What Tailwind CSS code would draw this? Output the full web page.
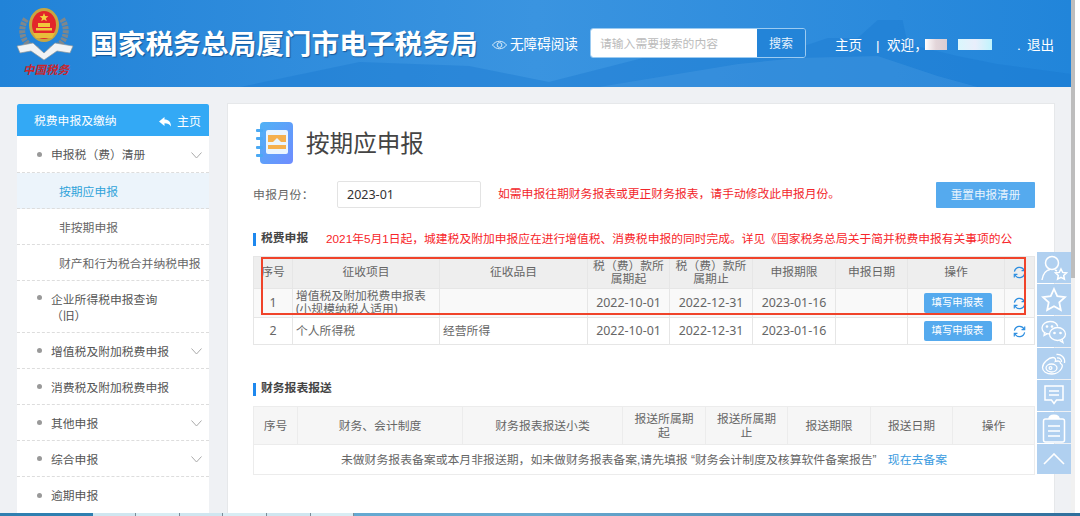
<!DOCTYPE html>
<html lang="zh-CN">
  <head>
    <meta charset="UTF-8" />
    <title>按期应申报</title>
    <script src="https://cdn.jsdelivr.net/npm/@tailwindcss/browser@4"></script>
  </head>
  <body class="bg-white overflow-hidden">
    <div class="relative w-[1080px] h-[516px] overflow-hidden flex flex-col font-['Liberation_Sans','Noto_Sans_CJK_SC',sans-serif] text-[#666]">
      <div class="flex-1 flex min-h-0">
        <div class="w-[1071px] flex flex-col bg-[#eff1f4]">
          <!-- header -->
          <header class="relative h-[87px] shrink-0 flex items-center overflow-hidden bg-gradient-to-r from-[#2183d8] via-[#3a94e0] to-[#2185da] text-white">
            <svg class="absolute left-[240px] top-[14px] w-[831px] h-[73px]" viewBox="0 0 834 73" preserveAspectRatio="none">
              <path d="M0 73 L120 48 L230 52 L310 68 L420 40 L500 34 L560 34 L590 24 L620 24 L640 6 L665 6 L670 30 L720 42 L760 50 L834 60 L834 73 Z" fill="#1a78cf" fill-opacity="0.4" />
              <path d="M360 73 L500 50 L560 44 L640 42 L700 62 L740 73 Z" fill="#5aa8e6" fill-opacity="0.25" />
            </svg>
            <!-- logo -->
            <div class="relative w-[90px] shrink-0 self-stretch">
              <svg class="absolute left-[15px] top-[6px] w-[60px] h-[56px]" viewBox="0 0 60 56">
                <path d="M11 13 C3 25 8 40 24 44" fill="none" stroke="#7f878b" stroke-width="6" stroke-dasharray="3 1" />
                <path d="M47 13 C55 25 50 40 34 44" fill="none" stroke="#7f878b" stroke-width="6" stroke-dasharray="3 1" />
                <path d="M2 40 L18 37 L29 47 L40 37 L58 40 L55 47 L42 45 L29 54 L16 45 L5 47 Z" fill="#f1f3f4" stroke="#8d969b" stroke-width="0.7" />
                <ellipse cx="29" cy="19" rx="15" ry="17" fill="#c9a640" />
                <ellipse cx="29" cy="19" rx="12" ry="14" fill="#e3262a" />
                <path d="M29 7 l1.2 3 3.2 0.2 -2.5 2 0.9 3 -2.8 -1.7 -2.8 1.7 0.9 -3 -2.5 -2 3.2 -0.2 Z" fill="#f4d23f" />
                <path d="M21 22 h16 v2.5 h-16 Z M23 17 h12 v4 h-12 Z" fill="#f1c93c" />
                <path d="M18 27 h22 l-3 5 h-16 Z" fill="#e8bd3a" />
              </svg>
              <span class="absolute left-[23px] top-[62px] text-[11.5px] leading-[16px] whitespace-nowrap text-[#c9252b] font-['Liberation_Serif','Noto_Sans_CJK_SC',serif] italic font-bold">中国税务</span>
            </div>
            <h1 class="relative w-[402px] shrink-0 text-[27.7px] leading-[34px] font-bold whitespace-nowrap [text-shadow:1px_1px_1px_rgba(0,40,90,0.5)] mt-[2px]">国家税务总局厦门市电子税务局</h1>
            <svg class="relative w-[15px] h-[10px] shrink-0 mt-[3px]" viewBox="0 0 15 10" fill="none" stroke="#d7ebfa" stroke-width="1">
              <path d="M0.5 5 C4 0 11 0 14.5 5 C11 10 4 10 0.5 5 Z" />
              <circle cx="7.5" cy="5" r="2.4" />
            </svg>
            <span class="relative ml-[3px] w-[80px] shrink-0 text-[13.6px] whitespace-nowrap mt-[3px]">无障碍阅读</span>
            <div class="relative w-[216px] h-[30px] shrink-0 flex rounded-[3px] border border-[#9ccbf1] overflow-hidden -mt-[1px]">
              <div class="flex-1 bg-white pl-[9px] pt-[1px] text-[11.8px] leading-[28px] text-[#bbb]">请输入需要搜索的内容</div>
              <div class="w-[48px] bg-[#2384d8] text-center pt-[1px] text-[12px] leading-[28px] text-[#e6f2fc]">搜索</div>
            </div>
            <nav class="relative flex items-center ml-[29px] text-[13.6px] whitespace-nowrap mt-[5px]">
              <span class="w-[41px]">主页</span>
              <span class="w-[11px]">|</span>
              <span class="w-[38px]">欢迎，</span>
              <span class="w-[22px] h-[11px] -mt-[2px] bg-gradient-to-r from-white via-[#e3d5d9] to-[#d8cdd3]"></span>
              <span class="w-[34px] h-[11px] -mt-[2px] ml-[11px] bg-gradient-to-r from-[#d9f7fd] via-[#e9eefb] to-[#bff3fd]"></span>
              <span class="w-[35px] pl-[25px]">.</span>
              <span>退出</span>
            </nav>
          </header>
          <!-- body -->
          <div class="flex-1 min-h-0 flex items-start pt-[17px] pl-[17px] gap-[18px] overflow-hidden">
            <aside class="w-[192px] shrink-0 h-[409px] bg-white text-[11.8px] text-[#666]">
              <div class="h-[32px] pt-[4px] flex items-center justify-between bg-[#33a9f5] text-white rounded-t-[2px] pl-[17px] pr-[8px]">
                <span>税费申报及缴纳</span>
                <span class="flex items-center gap-[6px] text-[12px]">
                  <svg class="w-[12px] h-[10px]" viewBox="0 0 12 10" fill="white"><path d="M0 4.5 L5.5 0 V2.6 C9.5 2.6 12 5 12 9.5 C10.5 7 8.5 6.2 5.5 6.2 V9 Z" /></svg>
                  主页
                </span>
              </div>
              <div class="h-[37px] pt-[4px] flex items-center pl-[20px] pr-[7px] border-b border-dashed border-[#ddd] text-[#555]">
                <i class="w-[5px] h-[5px] rounded-full bg-[#999] mr-[9px] mb-[4px]"></i>
                <span class="flex-1">申报税（费）清册</span>
                <svg class="w-[11px] h-[7px] mb-[2px]" viewBox="0 0 11 7" fill="none" stroke="#aaa"><path d="M0.5 0.5 L5.5 6 L10.5 0.5" /></svg>
              </div>
              <div class="h-[36px] pt-[4px] flex items-center pl-[42px] bg-[#ecf4fb] border-b border-dashed border-[#ddd] text-[#2fa3da]">按期应申报</div>
              <div class="h-[36px] pt-[4px] flex items-center pl-[42px] border-b border-dashed border-[#ddd]">非按期申报</div>
              <div class="h-[36px] pt-[4px] flex items-center pl-[42px] border-b border-dashed border-[#ddd] whitespace-nowrap">财产和行为税合并纳税申报</div>
              <div class="h-[52px] flex pt-[11px] pl-[20px] border-b border-dashed border-[#ddd] text-[#555]">
                <i class="w-[5px] h-[5px] rounded-full bg-[#999] mr-[9px] mt-[3px]"></i>
                <span class="leading-[16px]">企业所得税申报查询<br />（旧）</span>
              </div>
              <div class="h-[36px] pt-[4px] flex items-center pl-[20px] pr-[7px] border-b border-dashed border-[#ddd] text-[#555]">
                <i class="w-[5px] h-[5px] rounded-full bg-[#999] mr-[9px] mb-[4px]"></i>
                <span class="flex-1">增值税及附加税费申报</span>
                <svg class="w-[11px] h-[7px] mb-[2px]" viewBox="0 0 11 7" fill="none" stroke="#aaa"><path d="M0.5 0.5 L5.5 6 L10.5 0.5" /></svg>
              </div>
              <div class="h-[36px] pt-[4px] flex items-center pl-[20px] pr-[7px] border-b border-dashed border-[#ddd] text-[#555]">
                <i class="w-[5px] h-[5px] rounded-full bg-[#999] mr-[9px] mb-[4px]"></i>
                <span class="flex-1">消费税及附加税费申报</span>
              </div>
              <div class="h-[36px] pt-[4px] flex items-center pl-[20px] pr-[7px] border-b border-dashed border-[#ddd] text-[#555]">
                <i class="w-[5px] h-[5px] rounded-full bg-[#999] mr-[9px] mb-[4px]"></i>
                <span class="flex-1">其他申报</span>
                <svg class="w-[11px] h-[7px] mb-[2px]" viewBox="0 0 11 7" fill="none" stroke="#aaa"><path d="M0.5 0.5 L5.5 6 L10.5 0.5" /></svg>
              </div>
              <div class="h-[36px] pt-[4px] flex items-center pl-[20px] pr-[7px] border-b border-dashed border-[#ddd] text-[#555]">
                <i class="w-[5px] h-[5px] rounded-full bg-[#999] mr-[9px] mb-[4px]"></i>
                <span class="flex-1">综合申报</span>
                <svg class="w-[11px] h-[7px] mb-[2px]" viewBox="0 0 11 7" fill="none" stroke="#aaa"><path d="M0.5 0.5 L5.5 6 L10.5 0.5" /></svg>
              </div>
              <div class="h-[36px] pt-[4px] flex items-center pl-[20px] pr-[7px] text-[#555]">
                <i class="w-[5px] h-[5px] rounded-full bg-[#999] mr-[9px] mb-[4px]"></i>
                <span class="flex-1">逾期申报</span>
              </div>
            </aside>
            <!-- main card -->
            <main class="relative w-[828px] shrink-0 h-[420px] bg-white border-l border-t border-r border-[#e6e8ea] -mt-[1px] pl-[25px] pr-[19px] text-[11.8px]">
              <div class="flex items-center h-[42px] mt-[18px] pl-[3px]">
                <svg class="w-[38px] h-[42px]" viewBox="0 0 38 42">
                  <defs><linearGradient id="bk" x1="0" y1="0" x2="1" y2="1"><stop offset="0" stop-color="#4fb2f5" /><stop offset="1" stop-color="#6f8cff" /></linearGradient></defs>
                  <rect x="4" y="0" width="33" height="42" rx="4" fill="url(#bk)" />
                  <rect x="0" y="7" width="7" height="3" rx="1" fill="#4aa9f4" /><rect x="0" y="15" width="7" height="3" rx="1" fill="#4aa9f4" /><rect x="0" y="24" width="7" height="3" rx="1" fill="#4aa9f4" /><rect x="0" y="32" width="7" height="3" rx="1" fill="#4aa9f4" />
                  <rect x="10" y="8" width="22" height="24" rx="2" fill="#eaf5ff" />
                  <path d="M12 20 V13 H30 V20 H25 L21 16 L17 20 Z" fill="#f5b04e" />
                  <rect x="12" y="23" width="18" height="4" fill="#f5b04e" />
                </svg>
                <h2 class="ml-[12px] pt-[4px] text-[23.6px] text-[#444] font-normal">按期应申报</h2>
              </div>
              <div class="flex items-center mt-[17px] h-[27px]">
                <span class="w-[84px] pt-[3px] tracking-[0.4px] text-[#666]">申报月份：</span>
                <div class="w-[144px] h-[27px] border border-[#e3e3e3] rounded-[2px] pl-[9px] text-[12.5px] leading-[26px] text-[#333] font-['Noto_Sans','Noto_Sans_CJK_SC',sans-serif]">2023-01</div>
                <span class="ml-[17px] pt-[1px] flex-1 text-[#f2262b] text-[11.8px]">如需申报往期财务报表或更正财务报表，请手动修改此申报月份。</span>
                <button class="w-[99px] h-[26px] pt-[1px] rounded-[1px] bg-[#55aaee] text-[#e8f4fd] text-[11.6px]">重置申报清册</button>
              </div>
              <div class="flex items-center mt-[22px] h-[18px] whitespace-nowrap overflow-hidden">
                <i class="w-[3px] h-[13px] shrink-0 bg-[#1e88ee] mr-[5px]"></i>
                <b class="w-[65px] shrink-0 text-[#444] font-bold">税费申报</b>
                <span class="text-[#f7252a] text-[11.77px]">2021年5月1日起，城建税及附加申报应在进行增值税、消费税申报的同时完成。详见《国家税务总局关于简并税费申报有关事项的公</span>
              </div>
              <table class="table-fixed border-collapse mt-[8px] w-[781px] text-center text-[#666]">
                <colgroup><col class="w-[39px]" /><col class="w-[147px]" /><col class="w-[148px]" /><col class="w-[82px]" /><col class="w-[83px]" /><col class="w-[83px]" /><col class="w-[72px]" /><col class="w-[97px]" /><col class="w-[30px]" /></colgroup>
                <tr class="h-[32px] bg-[#eee] leading-[13px]">
                  <th class="border border-[#e6e6e6] font-normal">序号</th><th class="border border-[#e6e6e6] font-normal">征收项目</th><th class="border border-[#e6e6e6] font-normal">征收品目</th><th class="border border-[#e6e6e6] font-normal">税（费）款所属期起</th><th class="border border-[#e6e6e6] font-normal">税（费）款所属期止</th><th class="border border-[#e6e6e6] font-normal">申报期限</th><th class="border border-[#e6e6e6] font-normal">申报日期</th><th class="border border-[#e6e6e6] font-normal">操作</th>
                  <th class="border border-[#e6e6e6] font-normal"><svg class="w-[13px] h-[13px] mx-auto" viewBox="0 0 14 14" fill="none" stroke="#2f8fe0" stroke-width="1.3"><path d="M1.5 6 A5.6 5.6 0 0 1 12 4.5 M12.5 8 A5.6 5.6 0 0 1 2 9.5" /><path d="M12.6 1.5 V5 H9.2 M1.4 12.5 V9 H4.8" /></svg></th>
                </tr>
                <tr class="h-[28px] bg-[#f9f9f9] font-['Noto_Sans','Noto_Sans_CJK_SC',sans-serif] text-[12.4px]">
                  <td class="border border-[#e6e6e6]">1</td><td class="border border-[#e6e6e6] text-left pl-[3px] pb-[2px] text-[11.8px] leading-[13px]">增值税及附加税费申报表<br />(小规模纳税人适用)</td><td class="border border-[#e6e6e6]"></td><td class="border border-[#e6e6e6]">2022-10-01</td><td class="border border-[#e6e6e6]">2022-12-31</td><td class="border border-[#e6e6e6]">2023-01-16</td><td class="border border-[#e6e6e6]"></td>
                  <td class="border border-[#e6e6e6]"><button class="w-[68px] h-[20px] ml-[3px] rounded-[2px] bg-[#55aaee] text-white text-[10.4px]">填写申报表</button></td>
                  <td class="border border-[#e6e6e6]"><svg class="w-[13px] h-[13px] mx-auto" viewBox="0 0 14 14" fill="none" stroke="#2f8fe0" stroke-width="1.3"><path d="M1.5 6 A5.6 5.6 0 0 1 12 4.5 M12.5 8 A5.6 5.6 0 0 1 2 9.5" /><path d="M12.6 1.5 V5 H9.2 M1.4 12.5 V9 H4.8" /></svg></td>
                </tr>
                <tr class="h-[27px] font-['Noto_Sans','Noto_Sans_CJK_SC',sans-serif] text-[12.4px]">
                  <td class="border border-[#e6e6e6]">2</td><td class="border border-[#e6e6e6] text-left pl-[3px] text-[11.8px]">个人所得税</td><td class="border border-[#e6e6e6] text-left pl-[3px] text-[11.8px]">经营所得</td><td class="border border-[#e6e6e6]">2022-10-01</td><td class="border border-[#e6e6e6]">2022-12-31</td><td class="border border-[#e6e6e6]">2023-01-16</td><td class="border border-[#e6e6e6]"></td>
                  <td class="border border-[#e6e6e6]"><button class="w-[68px] h-[20px] ml-[3px] rounded-[2px] bg-[#55aaee] text-white text-[10.4px]">填写申报表</button></td>
                  <td class="border border-[#e6e6e6]"><svg class="w-[13px] h-[13px] mx-auto" viewBox="0 0 14 14" fill="none" stroke="#2f8fe0" stroke-width="1.3"><path d="M1.5 6 A5.6 5.6 0 0 1 12 4.5 M12.5 8 A5.6 5.6 0 0 1 2 9.5" /><path d="M12.6 1.5 V5 H9.2 M1.4 12.5 V9 H4.8" /></svg></td>
                </tr>
              </table>
              <div class="flex items-center mt-[35px] h-[18px]">
                <i class="w-[3px] h-[13px] bg-[#1e88ee] mr-[5px]"></i>
                <b class="text-[#444] font-bold">财务报表报送</b>
              </div>
              <table class="table-fixed border-collapse mt-[8px] w-[781px] text-center text-[#666]">
                <colgroup><col class="w-[44px]" /><col class="w-[165px]" /><col class="w-[160px]" /><col class="w-[83px]" /><col class="w-[82px]" /><col class="w-[83px]" /><col class="w-[82px]" /><col class="w-[82px]" /></colgroup>
                <tr class="h-[38px] bg-[#f6f6f6] leading-[14px]">
                  <th class="border border-[#ececec] font-normal">序号</th><th class="border border-[#ececec] font-normal">财务、会计制度</th><th class="border border-[#ececec] font-normal">财务报表报送小类</th><th class="border border-[#ececec] font-normal px-[10px]">报送所属期起</th><th class="border border-[#ececec] font-normal px-[10px]">报送所属期止</th><th class="border border-[#ececec] font-normal">报送期限</th><th class="border border-[#ececec] font-normal">报送日期</th><th class="border border-[#ececec] font-normal">操作</th>
                </tr>
                <tr class="h-[30px]">
                  <td colspan="8" class="border border-[#ececec] pt-[2px] text-[11.85px]">未做财务报表备案或本月非报送期，如未做财务报表备案,请先填报 “财务会计制度及核算软件备案报告” <a class="text-[#3a9be0] ml-[8px]">现在去备案</a></td>
                </tr>
              </table>
              <!-- red annotation box -->
              <div class="absolute left-[33px] top-[153px] w-[765px] h-[58px] border-2 border-[#f0432a]"></div>
            </main>
          </div>
        </div>
        <!-- scrollbar -->
        <div class="w-[4px] bg-[#f1f1f1]"><div class="h-[278px] bg-[#bdbdbd]"></div></div>
      </div>
      <!-- taskbar sliver -->
      <div class="h-[3px] shrink-0 flex bg-gradient-to-r from-[#5aa6d2] via-[#6aaad0] to-[#2f6f9c]">
        <div class="w-[93px] bg-[#2f7fb0]"></div>
        <div class="w-[43px] bg-[#cfe6f0] border-r border-[#7b8d99]"></div>
        <div class="w-[44px] bg-[#d8edf4] border-r border-[#7b8d99]"></div>
        <div class="w-[43px] bg-[#cfe6f0] border-r border-[#7b8d99]"></div>
        <div class="w-[44px] bg-[#d8edf4] border-r border-[#7b8d99]"></div>
        <div class="w-[44px] bg-[#cfe6f0] border-r border-[#7b8d99]"></div>
        <div class="w-[43px] bg-[#d8edf4] border-r border-[#7b8d99]"></div>
      </div>
      <!-- floating toolbar -->
      <div class="absolute left-[1037px] top-[252px] w-[34px] flex flex-col gap-[1px]">
        <div class="h-[31px] bg-[#b0d0f0] flex items-center justify-center"><svg class="w-[28px] h-[28px]" viewBox="0 0 28 28" fill="none" stroke="white" stroke-width="1.5"><circle cx="12" cy="9" r="6.5" /><path d="M2 26 C3 19 7 16 10 15.5 M15 16 L17 17" /><path d="M21 15 l1.7 3.4 3.8 0.5 -2.8 2.6 0.7 3.7 -3.4 -1.8 -3.4 1.8 0.7 -3.7 -2.8 -2.6 3.8 -0.5 Z" /></svg></div>
        <div class="h-[31px] bg-[#b0d0f0] flex items-center justify-center"><svg class="w-[26px] h-[26px]" viewBox="0 0 26 26" fill="none" stroke="white" stroke-width="1.8"><path d="M13 2 l3.3 7.2 7.7 0.9 -5.7 5.3 1.5 7.7 -6.8 -3.9 -6.8 3.9 1.5 -7.7 -5.7 -5.3 7.7 -0.9 Z" /></svg></div>
        <div class="h-[31px] bg-[#b0d0f0] flex items-center justify-center"><svg class="w-[26px] h-[24px]" viewBox="0 0 26 24" fill="none" stroke="white" stroke-width="1.3"><path d="M8.5 14 C4 14 1 11.5 1 8 C1 4 5 1.5 9 1.5 C13 1.5 16 3.5 16.7 6.5" /><path d="M3.5 12.5 L3 15.5 L6.5 13.7" /><ellipse cx="16.5" cy="14" rx="8" ry="6.5" /><path d="M21 19 L22 22.5 L18.5 20.4" /><circle cx="13.5" cy="13" r="0.7" fill="white" /><circle cx="19.5" cy="13" r="0.7" fill="white" /><circle cx="6" cy="6.5" r="0.7" fill="white" /><circle cx="11" cy="6.5" r="0.7" fill="white" /></svg></div>
        <div class="h-[31px] bg-[#b0d0f0] flex items-center justify-center"><svg class="w-[26px] h-[24px]" viewBox="0 0 26 24" fill="none" stroke="white" stroke-width="1.3"><path d="M11 22 C5.5 22 1.5 19.5 1.5 15.5 C1.5 11 8 5.5 12 5.5 C14.5 5.5 15 7.5 14.3 9.5 C17 8.5 19.5 9 19.5 11.5 C22 12.5 21.5 14.5 20.5 16.5 C18.5 20 15 22 11 22 Z" /><ellipse cx="10.5" cy="16" rx="5.5" ry="4" /><circle cx="9.5" cy="16" r="1.4" /><path d="M15.5 2.5 C20 2 24.5 5.5 23.5 11 M16 6 C18.5 5.5 21 7.5 20.5 10" /></svg></div>
        <div class="h-[31px] bg-[#b0d0f0] flex items-center justify-center"><svg class="w-[20px] h-[22px]" viewBox="0 0 20 22" fill="none" stroke="white" stroke-width="1.5"><path d="M1 1 H19 V15 H12.5 L10 18.5 L7.5 15 H1 Z" /><path d="M5 6 H15 M5 10 H15" /></svg></div>
        <div class="h-[31px] bg-[#b0d0f0] flex items-center justify-center"><svg class="w-[24px] h-[30px]" viewBox="0 0 24 30" fill="none" stroke="white" stroke-width="1.5"><rect x="1.5" y="6" width="21" height="23" rx="2" /><path d="M7 6 C7 1 17 1 17 6" fill="white" /><path d="M6 13 H18 M6 18 H18 M6 23 H18" /></svg></div>
        <div class="h-[30px] bg-[#b0d0f0] flex items-center justify-center"><svg class="w-[22px] h-[12px]" viewBox="0 0 22 12" fill="none" stroke="white" stroke-width="1.6"><path d="M1 11 L11 1 L21 11" /></svg></div>
      </div>
    </div>
  </body>
</html>
